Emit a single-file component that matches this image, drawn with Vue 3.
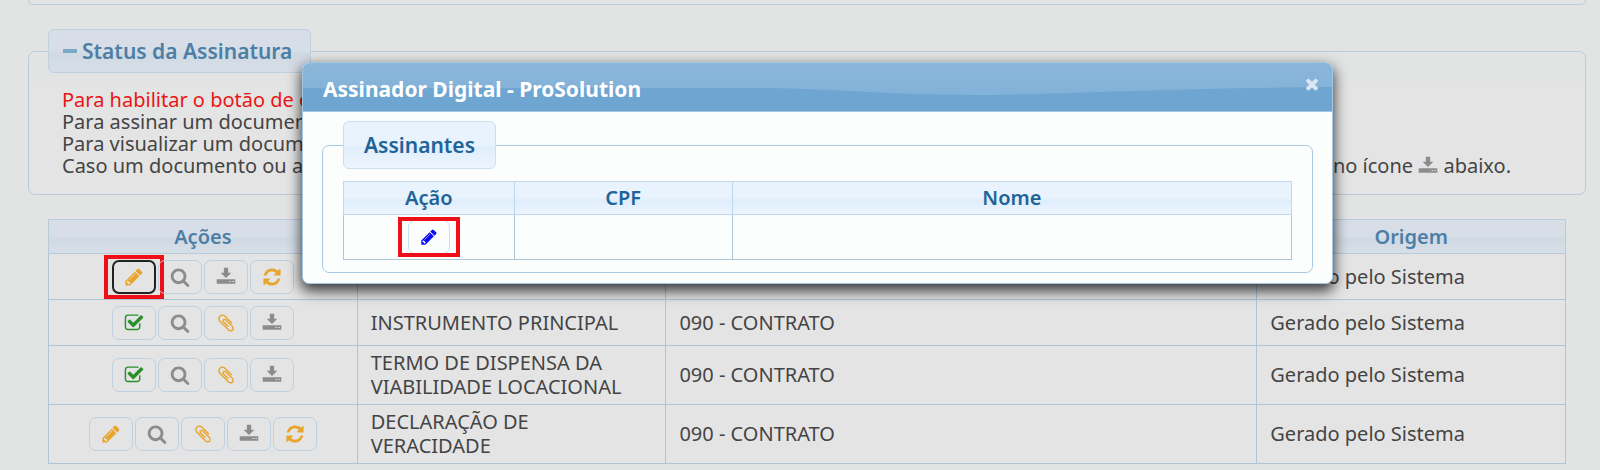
<script setup>
const icons = {
  pencil: 'M491 1536l91-91-235-235-91 91v107h128v128h107zM1014 608q0-22-22-22-10 0-17 7l-542 542q-7 7-7 17 0 22 22 22 10 0 17-7l542-542q7-7 7-17zM960 416l416 416-832 832h-416v-416zM1643 512q0 53-37 90l-166 166-416-416 166-165q36-38 90-38 53 0 91 38l235 234q37 39 37 91z',
  search: 'M1216 832q0-185-131.5-316.5t-316.5-131.5-316.5 131.5-131.5 316.5 131.5 316.5 316.5 131.5 316.5-131.5 131.5-316.5zM1728 1664q0 52-38 90t-90 38q-54 0-90-38l-343-342q-179 124-399 124-143 0-273.5-55.5t-225-150-150-225-55.5-273.5 55.5-273.5 150-225 225-150 273.5-55.5 273.5 55.5 225 150 150 225 55.5 273.5q0 220-124 399l343 343q37 37 37 90z',
  refresh: 'M1639 1056q0 5-1 7-64 268-268 434.5t-478 166.5q-146 0-282.5-55t-243.5-157l-129 129q-19 19-45 19t-45-19-19-45v-448q0-26 19-45t45-19h448q26 0 45 19t19 45-19 45l-137 137q71 66 161 102t187 36q134 0 250-65t186-179q11-17 53-117 8-23 30-23h192q13 0 22.5 9.5t9.5 22.5zM1664 256v448q0 26-19 45t-45 19h-448q-26 0-45-19t-19-45 19-45l138-138q-148-137-349-137-134 0-250 65t-186 179q-11 17-53 117-8 23-30 23h-199q-13 0-22.5-9.5t-9.5-22.5v-7q65-268 270-434.5t480-166.5q146 0 284 55.5t245 156.5l130-129q19-19 45-19t45 19 19 45z',
  check: 'M1472 930v318q0 119-84.5 203.5t-203.5 84.5h-832q-119 0-203.5-84.5t-84.5-203.5v-832q0-119 84.5-203.5t203.5-84.5h832q63 0 117 25 15 7 18 23 3 17-9 29l-49 49q-10 10-23 10-3 0-9-2-23-6-45-6h-832q-66 0-113 47t-47 113v832q0 66 47 113t113 47h832q66 0 113-47t47-113v-254q0-13 9-22l64-64q10-10 23-10 6 0 12 3 20 8 20 29zm231-489l-814 814q-24 24-57 24t-57-24l-430-430q-24-24-24-57t24-57l110-110q24-24 57-24t57 24l263 263 647-647q24-24 57-24t57 24l110 110q24 24 24 57t-24 57z',
  clip: 'M1596 1385q0 117-79 196t-196 79q-135 0-235-100l-777-776q-113-115-113-271 0-159 110-270t269-111q158 0 273 113l605 606q10 10 10 22 0 16-30.5 46.5t-46.5 30.5q-13 0-23-10l-606-607q-79-77-181-77-106 0-179 75t-73 181q0 105 76 181l776 777q63 63 145 63 64 0 106-42t42-106q0-82-63-145l-581-581q-26-24-60-24-29 0-48 19t-19 48q0 32 25 59l410 410q10 10 10 22 0 16-31 47t-47 31q-12 0-22-10l-410-410q-63-61-63-149 0-82 57-139t139-57q88 0 149 63l581 581q100 98 100 235z',
  download: 'M704 64h384v448h288l-480 480-480-480h288zM64 1088h1664v416h-1664zM1216 1248v96h128v-96zM1472 1248v96h128v-96z',
  times: 'M1490 1322q0 40-28 68l-136 136q-28 28-68 28t-68-28l-294-294-294 294q-28 28-68 28t-68-28l-136-136q-28-28-28-68t28-68l294-294-294-294q-28-28-28-68t28-68l136-136q28-28 68-28t68 28l294 294 294-294q28-28 68-28t68 28l136 136q28 28 28 68t-28 68l-294 294 294 294q28 28 28 68z'
}
const labels = {
  pencil: 'Assinar', search: 'Visualizar', refresh: 'Atualizar',
  check: 'Assinado', clip: 'Anexar', download: 'Baixar'
}
const rows = [
  { actions: ['pencil', 'search', 'download', 'refresh'], active: true, name: '', type: '' },
  { actions: ['check', 'search', 'clip', 'download'], name: 'INSTRUMENTO PRINCIPAL', type: '090 - CONTRATO' },
  { actions: ['check', 'search', 'clip', 'download'], name: 'TERMO DE DISPENSA DA VIABILIDADE LOCACIONAL', type: '090 - CONTRATO' },
  { actions: ['pencil', 'search', 'clip', 'download', 'refresh'], name: 'DECLARAÇÃO DE VERACIDADE', type: '090 - CONTRATO' }
]
</script>

<template>
  <main class="page">
    <div class="previous"></div>

    <fieldset class="panel status">
      <legend>
        <button type="button" class="toggle"><span class="minus"></span>Status da Assinatura</button>
      </legend>
      <p class="alert">Para habilitar o botão de e</p>
      <p>Para assinar um document</p>
      <p>Para visualizar um docume</p>
      <p class="split">
        <span>Caso um documento ou as</span>
        <span>no ícone <svg class="icon download" viewBox="0 0 1792 1792"><path fill-rule="evenodd" :d="icons.download" /></svg> abaixo.</span>
      </p>
    </fieldset>

    <table class="grid documents">
      <colgroup><col class="c-side" /><col class="c-side" /><col /><col class="c-side" /></colgroup>
      <thead>
        <tr><th>Ações</th><th></th><th></th><th>Origem</th></tr>
      </thead>
      <tbody>
        <tr v-for="(row, i) in rows" :key="i">
          <td>
            <div class="actions">
              <button
                v-for="(a, j) in row.actions" :key="a" type="button" class="action"
                :class="{ active: row.active && j === 0, marked: row.active && j === 0 }" :aria-label="labels[a]"
              >
                <svg class="icon" :class="a" viewBox="0 0 1792 1792"><path fill-rule="evenodd" :d="icons[a]" /></svg>
              </button>
            </div>
          </td>
          <td>{{ row.name }}</td>
          <td>{{ row.type }}</td>
          <td>Gerado pelo Sistema</td>
        </tr>
      </tbody>
    </table>

    <section class="dialog" role="dialog" aria-labelledby="dialog-title">
      <header class="titlebar">
        <svg class="wave" viewBox="0 0 1030 48" preserveAspectRatio="none">
          <path d="M0 25H440C530 25 580 32 668 32S830 26 1030 24V48H0Z" />
        </svg>
        <h2 id="dialog-title">Assinador Digital - ProSolution</h2>
        <button type="button" class="close" aria-label="Fechar">
          <svg class="icon" viewBox="0 0 1792 1792"><path :d="icons.times" /></svg>
        </button>
      </header>
      <div class="body">
        <fieldset class="panel signers">
          <legend>Assinantes</legend>
          <table class="grid">
            <colgroup><col class="s-action" /><col class="s-cpf" /><col /></colgroup>
            <thead>
              <tr><th>Ação</th><th>CPF</th><th>Nome</th></tr>
            </thead>
            <tbody>
              <tr>
                <td>
                  <div class="actions">
                    <button type="button" class="action sign marked" aria-label="Assinar">
                      <svg class="icon" viewBox="0 0 1792 1792"><path :d="icons.pencil" /></svg>
                    </button>
                  </div>
                </td>
                <td></td>
                <td></td>
              </tr>
            </tbody>
          </table>
        </fieldset>
      </div>
    </section>
  </main>
</template>

<style>
html { background: #e2e4e3; }
</style>

<style scoped>
.page {
  position: relative;
  padding: 0 14px 5px 28px;
  overflow: hidden;
  font: 20px/22px "Noto Sans", "Open Sans", sans-serif;
  color: #444;
}
.page * { box-sizing: border-box; }
.previous {
  height: 5px;
  margin-bottom: 24px;
  border: 1px solid #b9cad9;
  border-top: 0;
  border-radius: 0 0 6px 6px;
}
.panel {
  margin: 0;
  min-width: 0;
  border: 1px solid #b9cad9;
  border-radius: 7px;
}
.panel legend {
  border: 1px solid #bfd0df;
  border-radius: 6px;
  font-size: 21px;
  font-weight: 600;
}
.status {
  padding: 16px 74px 17px 33px;
  background: linear-gradient(#e2e4e3, #e4e4e4 60%);
}
.status legend {
  margin-left: -14px;
  padding: 0;
  background: linear-gradient(#d7dee8 50%, #d0dae3 55%, #d7dee8);
}
.toggle {
  display: flex;
  align-items: center;
  gap: 5px;
  height: 42px;
  padding: 0 18px 0 14px;
  border: 0;
  background: none;
  font: inherit;
  color: #4d7fa6;
}
.minus { width: 14px; height: 4px; background: #7ba9c8; }
p { margin: 0; }
.alert { color: #e81717; }
.split { display: flex; justify-content: space-between; }

.icon { display: block; width: 20px; height: 20px; fill: currentColor; }
.split .icon { display: inline-block; vertical-align: -3px; }

.grid { width: 100%; border-collapse: collapse; table-layout: fixed; }
.grid th, .grid td { border: 1px solid #adc5d8; }
.grid th { font-weight: 600; padding: 0; }
.documents { width: calc(100% - 40px); margin: 24px 20px 0; background: #e4e4e4; line-height: 24px; }
.documents th {
  height: 34px;
  color: #4d7fa6;
  border-color: #b9cad9;
  background: linear-gradient(#d7dee8 45%, #d0dae3 55%, #d7dee8);
}
.documents td { height: 46px; padding: 5px 13px; }
.c-side { width: 20.35%; }

.actions { display: flex; justify-content: center; gap: 2px; }
.action {
  position: relative;
  display: flex;
  align-items: center;
  justify-content: center;
  width: 44px;
  height: 34px;
  padding: 0;
  border: 1px solid #bfd0df;
  border-radius: 7px;
  background: transparent;
  color: #e8a52c;
}
.search, .download { color: #8c8c8c; }
.check { color: #2a8f2a; }
.active { border: 2px solid #222; }
.marked::after {
  content: "";
  position: absolute;
  inset: -7px -10px;
  border: 4px solid #ee1016;
}

.dialog {
  position: absolute;
  top: 62px;
  left: 302px;
  right: 267px;
  border: 1px solid #a3c6e2;
  border-radius: 7px;
  background: #fcfdfd;
  box-shadow: 0 6px 14px 1px rgba(0, 0, 0, .75);
}
.titlebar {
  position: relative;
  display: flex;
  align-items: center;
  justify-content: space-between;
  height: 49px;
  padding: 3px 11px 0 20px;
  border-bottom: 1px solid #a3c6e2;
  border-radius: 6px 6px 0 0;
  background: linear-gradient(#8cb6da, #83b2d8 60%);
  overflow: hidden;
}
.wave { position: absolute; inset: 0; width: 100%; height: 100%; fill: #6ea5d1; }
.titlebar h2 { position: relative; margin: 0; font-size: 21px; font-weight: 700; color: #fff; }
.close { position: relative; margin-bottom: 10px; padding: 0; border: 0; background: none; color: #dbe7f5; }
.close .icon { width: 18px; height: 18px; }
.body { padding: 9px 19px 10px; }
.signers { padding: 12px 20px; border-color: #a9c9e5; }
.signers legend {
  height: 48px;
  padding: 0 20px;
  line-height: 46px;
  color: #1f6499;
  border-color: #cbdff0;
  background: linear-gradient(#e8f3fd 50%, #dfeefb 55%, #edf5fe);
}
.signers .grid th {
  height: 33px;
  color: #1f6499;
  border-color: #c0d8eb;
  background: linear-gradient(#e9f3fd 50%, #deedfb 55%, #edf5fe);
}
.signers .grid td { height: 45px; padding: 0; }
.s-action { width: 18%; }
.s-cpf { width: 23%; }
.sign { width: 42px; color: #0a0af5; border-color: #cbdff0; }
.sign .icon { width: 18px; height: 18px; }
.sign::after { inset: -4px -11px; }
</style>
